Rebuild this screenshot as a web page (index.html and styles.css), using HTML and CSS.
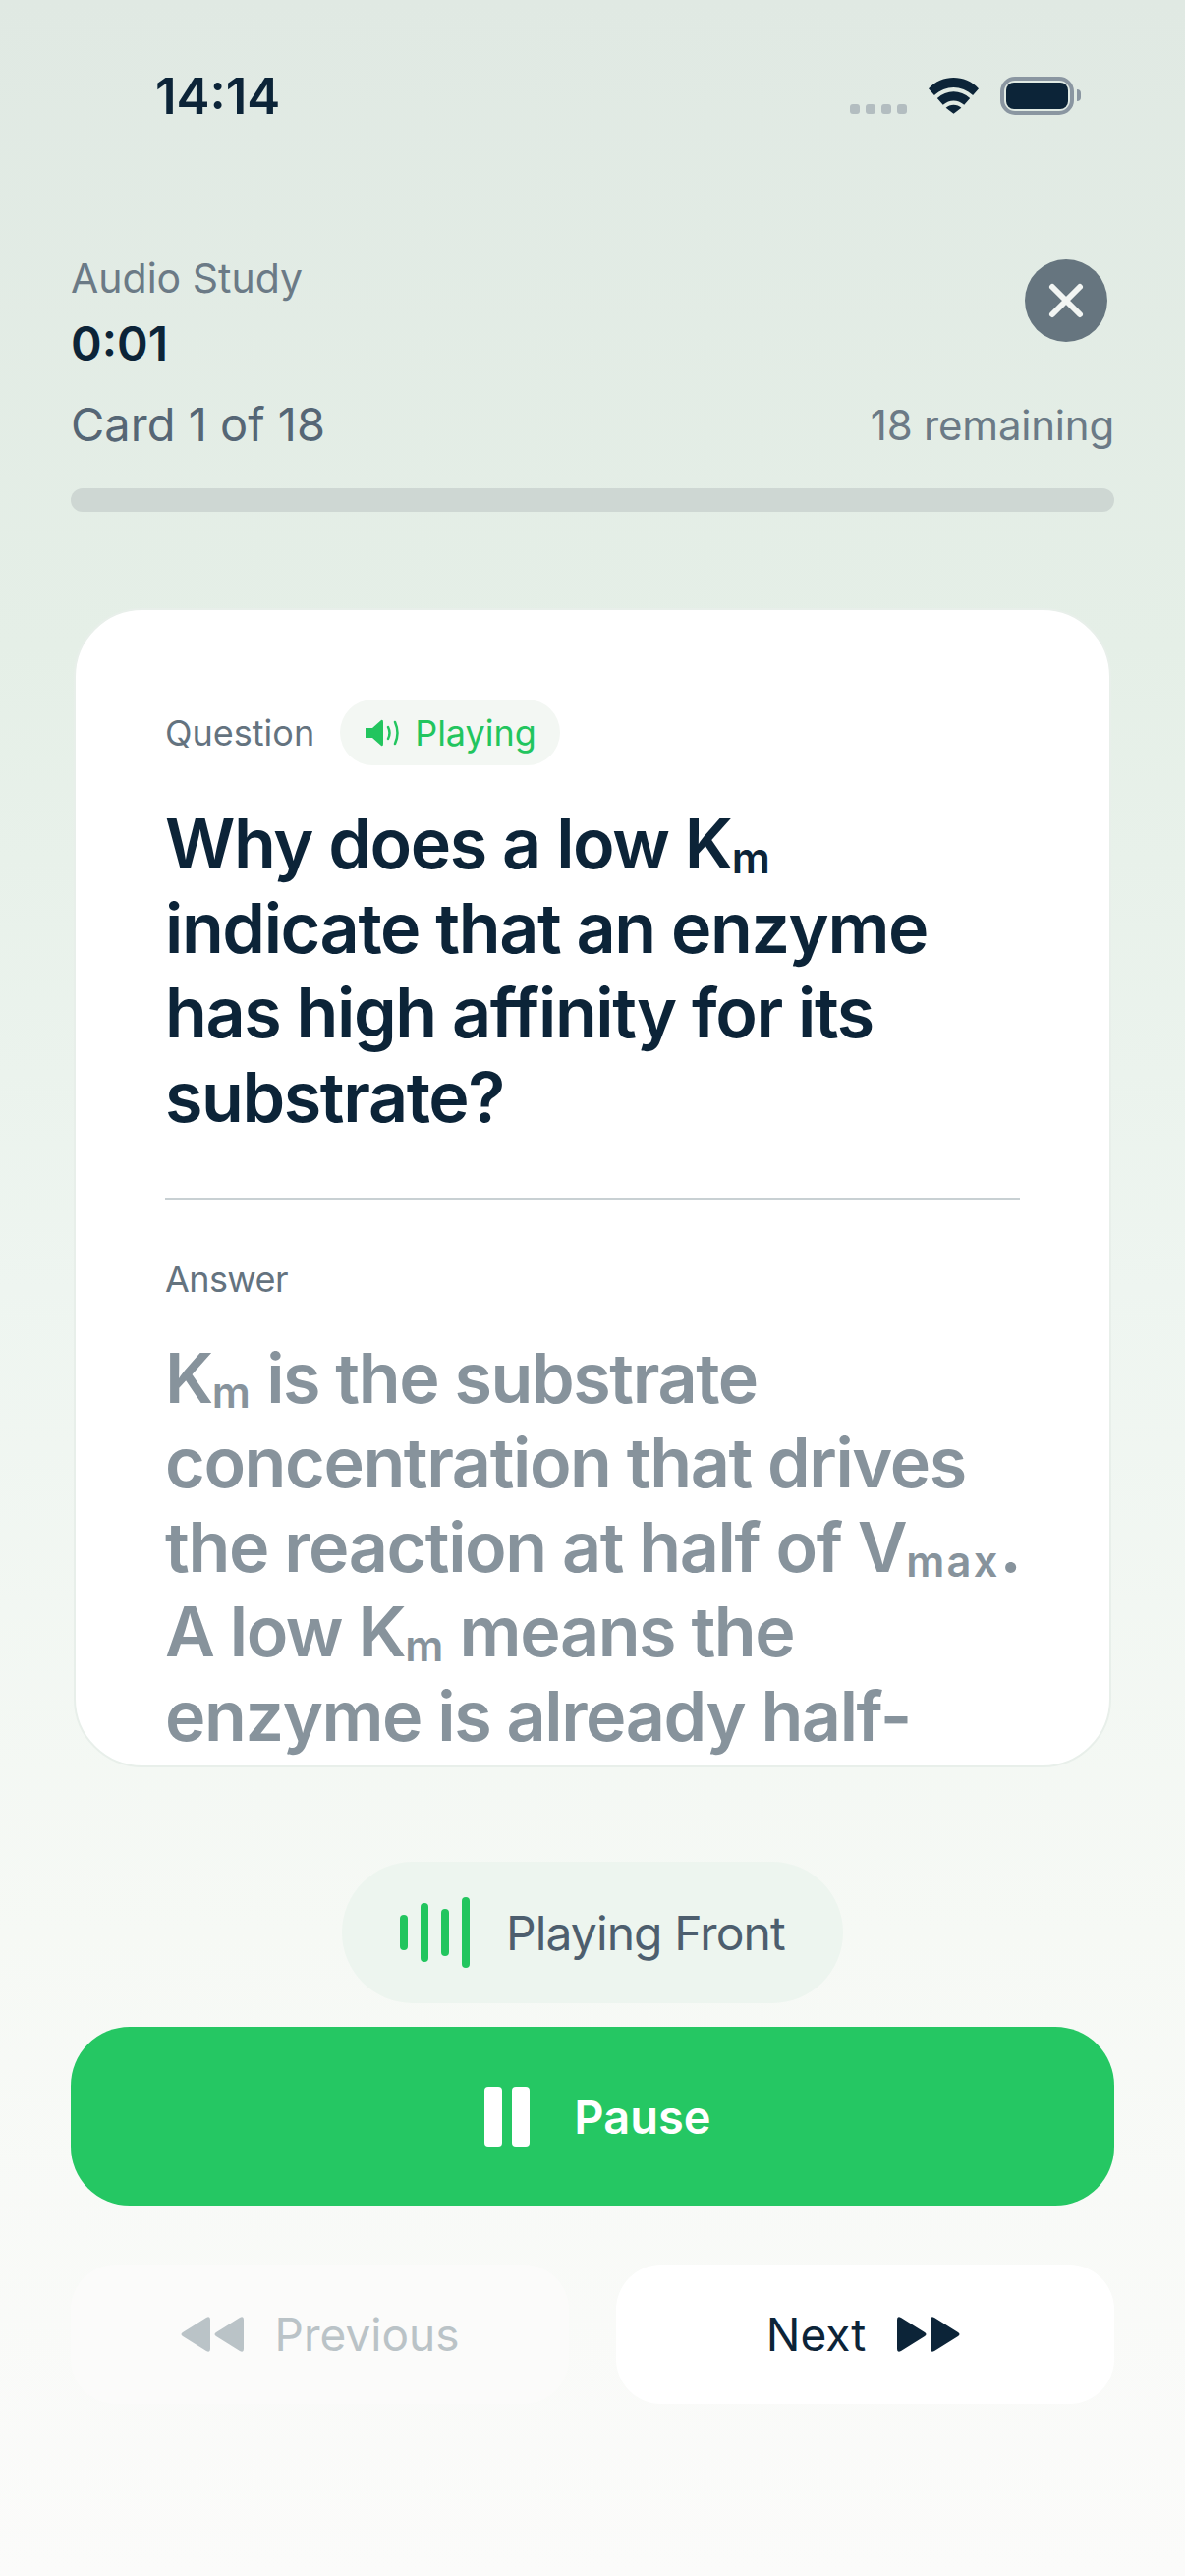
FILE: index.html
```html
<!DOCTYPE html>
<html lang="en">
<head>
<meta charset="UTF-8">
<meta name="viewport" content="width=device-width, initial-scale=1.0">
<title>Audio Study</title>
<link rel="stylesheet" href="styles.css">
</head>
<body>
    <div class="status-bar">
        <span class="status-time">14:14</span>
        <div class="status-icons">
            <div class="signal"><i></i><i></i><i></i><i></i></div>
            <svg class="wifi" width="51" height="38" viewBox="0 0 52 38">
                <path d="M0 12 C14 -3 38 -3 52 12 L46 19 C34 8 18 8 6 19 Z" fill="#0c2438"/>
                <path d="M9 22 C19 13 33 13 43 22 L37 29 C30 23 22 23 15 29 Z" fill="#0c2438"/>
                <path d="M18 32 C22 28 30 28 34 32 L26 38 Z" fill="#0c2438"/>
            </svg>
            <div class="battery"><div class="battery-fill"></div></div>
            <div class="battery-cap"></div>
        </div>
    </div>

    <div class="header">
        <div class="header-top">
            <div>
                <div class="header-label">Audio Study</div>
                <div class="header-timer">0:01</div>
            </div>
            <button class="close-btn">
                <svg width="38" height="38" viewBox="0 0 38 38">
                    <path d="M5 5 L33 33 M33 5 L5 33" stroke="#f2f5f3" stroke-width="6" stroke-linecap="round"/>
                </svg>
            </button>
        </div>
        <div class="header-count">
            <span class="count-main">Card 1 of 18</span>
            <span class="count-rest">18 remaining</span>
        </div>
        <div class="progress"></div>
    </div>

    <div class="card">
        <div class="card-label-row">
            <span class="card-label">Question</span>
            <span class="playing-pill">
                <svg width="36" height="28" viewBox="0 0 36 28">
                    <path d="M0 9 H7 L16 1 Q18 0 18 3 V25 Q18 28 16 27 L7 19 H0 Z" fill="#22c55e"/>
                    <path d="M23 8 Q26 14 23 20 M30 3 Q35 14 30 25" fill="none" stroke="#22c55e" stroke-width="2.5" stroke-linecap="round"/>
                </svg>
                Playing
            </span>
        </div>
        <h1 class="question">Why does a low K<sub>m</sub> indicate that an enzyme has high affinity for its substrate?</h1>
        <div class="divider"></div>
        <div class="card-label answer-label">Answer</div>
        <p class="answer">K<sub>m</sub> is the substrate concentration that drives the reaction at half of V<sub class="wide">max</sub><b class="dot">.</b> A low K<sub>m</sub> means the enzyme is already half-saturated at a low substrate concentration.</p>
    </div>

    <div class="now-row">
        <div class="now-pill">
            <div class="bars"><i class="b1"></i><i class="b2"></i><i class="b3"></i><i class="b4"></i></div>
            <span>Playing Front</span>
        </div>
    </div>

    <button class="pause-btn">
        <span class="pause-icon"><i></i><i></i></span>
        Pause
    </button>

    <div class="nav-row">
        <button class="nav-btn prev">
            <svg width="64" height="36" viewBox="0 0 64 36">
                <path d="M30 3 V33 Q30 37 26 35 L2 20 Q-1 18 2 16 L26 1 Q30 -1 30 3 Z M64 3 V33 Q64 37 60 35 L36 20 Q33 18 36 16 L60 1 Q64 -1 64 3 Z" fill="#bac3c7"/>
            </svg>
            Previous
        </button>
        <button class="nav-btn next">
            Next
            <svg width="64" height="36" viewBox="0 0 64 36">
                <path d="M0 3 V33 Q0 37 4 35 L28 20 Q31 18 28 16 L4 1 Q0 -1 0 3 Z M34 3 V33 Q34 37 38 35 L62 20 Q65 18 62 16 L38 1 Q34 -1 34 3 Z" fill="#0c2438"/>
            </svg>
        </button>
    </div>
</body>
</html>
```

FILE: styles.css
```css
* {
    box-sizing: border-box;
}
body {
    margin: 0;
    height: 2622px;
    overflow: hidden;
    font-family: Inter, "Noto Sans", sans-serif;
    background: linear-gradient(180deg, #e0e9e3 0%, #e5efe7 25%, #eef5f0 50%, #f6f9f5 75%, #fbfbfa 100%);
    color: #0c2438;
}
button {
    font-family: inherit;
    border: none;
}

/* status bar */
.status-bar {
    display: flex;
    justify-content: space-between;
    align-items: center;
    height: 54px;
    margin-top: 70px;
    padding: 0 106px 0 158px;
}
.status-time {
    font-size: 51px;
    font-weight: 600;
}
.status-icons {
    display: flex;
    align-items: center;
}
.signal {
    display: flex;
    gap: 6px;
    margin: 28px 22px 0 0;
}
.signal i {
    width: 10px;
    height: 10px;
    border-radius: 3px;
    background: #b3bdc0;
}
.battery {
    width: 75px;
    height: 39px;
    margin-left: 22px;
    padding: 2px;
    border: 4px solid #8a96a1;
    border-radius: 15px;
}
.battery-fill {
    height: 100%;
    background: #0c2438;
    border-radius: 8px;
}
.battery-cap {
    width: 4px;
    height: 12px;
    margin-left: 3px;
    background: #8a96a1;
    border-radius: 0 4px 4px 0;
}

/* header */
.header {
    padding: 0 72px;
    margin-top: 135px;
}
.header-top {
    display: flex;
    justify-content: space-between;
    align-items: flex-start;
}
.header-label {
    font-size: 41px;
    line-height: 48px;
    color: #6b7a86;
}
.header-timer {
    font-size: 48px;
    font-weight: 600;
    line-height: 56px;
    margin-top: 15px;
}
.close-btn {
    display: flex;
    align-items: center;
    justify-content: center;
    width: 84px;
    height: 84px;
    margin: 5px 7px 0 0;
    padding: 0;
    border-radius: 50%;
    background: #66757f;
}
.header-count {
    display: flex;
    justify-content: space-between;
    align-items: center;
    margin-top: 26px;
}
.count-main {
    font-size: 47px;
    line-height: 56px;
    color: #556675;
}
.count-rest {
    font-size: 42px;
    letter-spacing: -0.2px;
    color: #6b7a86;
}
.progress {
    height: 24px;
    margin-top: 37px;
    border-radius: 12px;
    background: #ced7d3;
}

/* card */
.card {
    height: 1180px;
    margin: 98px 75px 0;
    padding: 91px 91px 0;
    overflow: hidden;
    background: #fff;
    border: 2px solid #e8efea;
    border-radius: 70px;
}
.card-label-row {
    display: flex;
    align-items: center;
    gap: 26px;
}
.card-label {
    font-size: 36px;
    color: #64737f;
}
.playing-pill {
    display: flex;
    align-items: center;
    gap: 14px;
    height: 67px;
    padding: 0 24px 0 26px;
    border-radius: 34px;
    background: #f3f7f3;
    font-size: 36px;
    color: #22c55e;
}
.question,
.answer {
    margin: 0;
    font-size: 70px;
    font-weight: 600;
    line-height: 86px;
    letter-spacing: -1.4px;
}
.question {
    margin-top: 37px;
}
sub {
    font-size: 0.62em;
    line-height: 0;
    vertical-align: -0.12em;
    letter-spacing: 0;
}
sub.wide {
    letter-spacing: 0.05em;
}
.dot {
    font-weight: 600;
}
.divider {
    height: 2px;
    margin-top: 59px;
    background: #c8d0d3;
}
.answer-label {
    margin-top: 59px;
    line-height: 44px;
    letter-spacing: -0.6px;
}
.answer {
    margin-top: 36px;
    color: #87939c;
}

/* bottom controls */
.now-row {
    display: flex;
    justify-content: center;
    margin-top: 96px;
}
.now-pill {
    display: flex;
    align-items: center;
    gap: 37px;
    width: 510px;
    height: 144px;
    padding-left: 59px;
    border-radius: 72px;
    background: #edf5ef;
    font-size: 48px;
    letter-spacing: -0.9px;
    color: #4d5e6e;
}
.bars {
    display: flex;
    align-items: center;
    gap: 13px;
}
.bars i {
    width: 8px;
    border-radius: 4px;
    background: #22c55e;
}
.b1 { height: 36px; }
.b2 { height: 60px; }
.b3 { height: 48px; }
.b4 { height: 72px; }
.pause-btn {
    display: flex;
    align-items: center;
    justify-content: center;
    gap: 45px;
    width: 1062px;
    height: 182px;
    margin: 24px 72px 0;
    padding-left: 17px;
    border-radius: 60px;
    background: #25c763;
    color: #fff;
    font-size: 47px;
    font-weight: 600;
}
.pause-icon {
    display: flex;
    gap: 10px;
}
.pause-icon i {
    width: 18px;
    height: 61px;
    border-radius: 4px;
    background: #fff;
}
.nav-row {
    display: flex;
    justify-content: space-between;
    margin: 60px 72px 0;
}
.nav-btn {
    display: flex;
    align-items: center;
    justify-content: center;
    gap: 32px;
    width: 507px;
    height: 142px;
    border-radius: 46px;
    font-size: 46px;
}
.prev {
    background: #fbfbfa;
    color: #bac3c7;
}
.next {
    background: #fff;
    color: #0c2438;
    padding-left: 2px;
}
```
